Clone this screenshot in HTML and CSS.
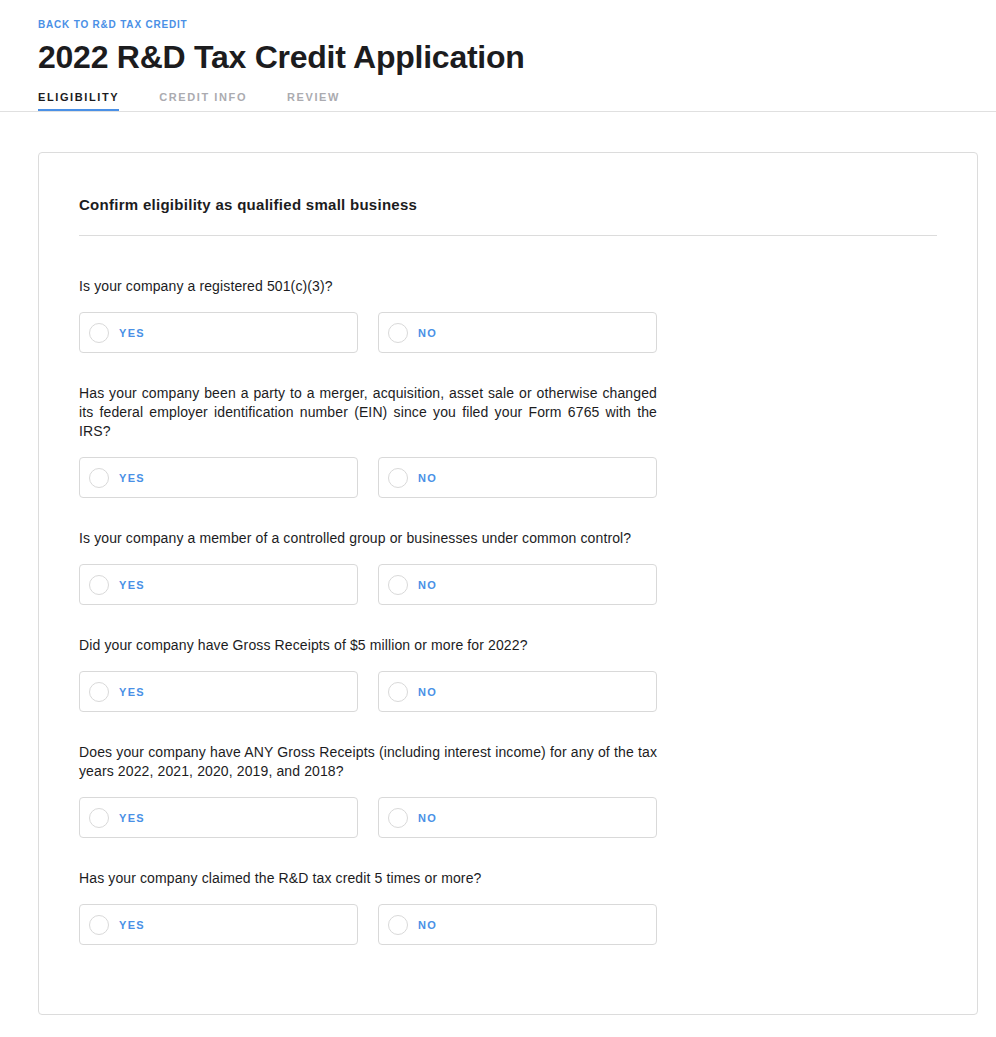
FILE: index.html
```html
<!DOCTYPE html>
<html lang="en">
<head>
    <meta charset="UTF-8">
    <meta name="viewport" content="width=device-width, initial-scale=1.0">
    <title>2022 R&amp;D Tax Credit Application</title>
    <link rel="stylesheet" href="styles.css">
</head>
<body>

<div class="page-header">
    <a class="back-link" href="#">Back to R&amp;D Tax Credit</a>
    <h1>2022 R&amp;D Tax Credit Application</h1>
    <nav class="tabs">
        <a class="tab active" href="#">Eligibility</a>
        <a class="tab" href="#">Credit Info</a>
        <a class="tab" href="#">Review</a>
    </nav>
</div>

<div class="main">
    <div class="card">
        <h2>Confirm eligibility as qualified small business</h2>

        <div class="question">
            <p>Is your company a registered 501(c)(3)?</p>
            <div class="options">
                <label class="option"><input type="radio" name="q1"><span class="radio"></span>Yes</label>
                <label class="option"><input type="radio" name="q1"><span class="radio"></span>No</label>
            </div>
        </div>

        <div class="question">
            <p>Has your company been a party to a merger, acquisition, asset sale or otherwise changed its federal employer identification number (EIN) since you filed your Form 6765 with the IRS?</p>
            <div class="options">
                <label class="option"><input type="radio" name="q2"><span class="radio"></span>Yes</label>
                <label class="option"><input type="radio" name="q2"><span class="radio"></span>No</label>
            </div>
        </div>

        <div class="question">
            <p>Is your company a member of a controlled group or businesses under common control?</p>
            <div class="options">
                <label class="option"><input type="radio" name="q3"><span class="radio"></span>Yes</label>
                <label class="option"><input type="radio" name="q3"><span class="radio"></span>No</label>
            </div>
        </div>

        <div class="question">
            <p>Did your company have Gross Receipts of $5 million or more for 2022?</p>
            <div class="options">
                <label class="option"><input type="radio" name="q4"><span class="radio"></span>Yes</label>
                <label class="option"><input type="radio" name="q4"><span class="radio"></span>No</label>
            </div>
        </div>

        <div class="question">
            <p>Does your company have ANY Gross Receipts (including interest income) for any of the tax years 2022, 2021, 2020, 2019, and 2018?</p>
            <div class="options">
                <label class="option"><input type="radio" name="q5"><span class="radio"></span>Yes</label>
                <label class="option"><input type="radio" name="q5"><span class="radio"></span>No</label>
            </div>
        </div>

        <div class="question">
            <p>Has your company claimed the R&amp;D tax credit 5 times or more?</p>
            <div class="options">
                <label class="option"><input type="radio" name="q6"><span class="radio"></span>Yes</label>
                <label class="option"><input type="radio" name="q6"><span class="radio"></span>No</label>
            </div>
        </div>
    </div>
</div>

</body>
</html>
```

FILE: styles.css
```css
body {
    margin: 0;
    font-family: "Liberation Sans", Arial, sans-serif;
    color: #1c1c1e;
    background-color: #fff;
}
.page-header {
    padding: 18px 0 0 38px;
    border-bottom: 1px solid #e0e0e0;
}
.back-link {
    display: block;
    font-size: 10px;
    line-height: 14px;
    font-weight: bold;
    letter-spacing: 0.8px;
    text-transform: uppercase;
    color: #4a90e6;
    text-decoration: none;
}
h1 {
    margin: 7px 0 0;
    font-size: 32px;
    line-height: 36px;
    font-weight: bold;
    letter-spacing: -0.25px;
    color: #1c1c1e;
}
.tabs {
    display: flex;
    gap: 40px;
    margin-top: 15px;
}
.tab {
    font-size: 11px;
    line-height: 14px;
    font-weight: bold;
    letter-spacing: 1.6px;
    text-transform: uppercase;
    color: #ababb0;
    text-decoration: none;
    padding-bottom: 5px;
    border-bottom: 2px solid transparent;
}
.tab.active {
    color: #1c1c1e;
    border-bottom-color: #4a90e6;
}
.main {
    padding: 40px 18px 40px 38px;
}
.card {
    border: 1px solid #dcdcdc;
    border-radius: 4px;
    padding: 40px 40px 38px;
}
h2 {
    margin: 0 0 41px;
    padding-bottom: 18px;
    border-bottom: 1px solid #dcdcdc;
    font-size: 15px;
    line-height: 24px;
    font-weight: bold;
    letter-spacing: 0.28px;
}
.question {
    max-width: 578px;
    margin-bottom: 31px;
}
.question p {
    margin: 0 0 16px;
    font-size: 14px;
    line-height: 19px;
    letter-spacing: 0.12px;
    text-align: justify;
}
.options {
    display: grid;
    grid-template-columns: 1fr 1fr;
    gap: 20px;
}
.option {
    display: flex;
    align-items: center;
    gap: 10px;
    height: 39px;
    padding: 0 9px;
    border: 1px solid #d9d9d9;
    border-radius: 4px;
    font-size: 11px;
    font-weight: bold;
    letter-spacing: 1.3px;
    text-transform: uppercase;
    color: #4a90e6;
    cursor: pointer;
}
.option input {
    display: none;
}
.radio {
    width: 18px;
    height: 18px;
    border: 1px solid #d9d9d9;
    border-radius: 50%;
}
```
